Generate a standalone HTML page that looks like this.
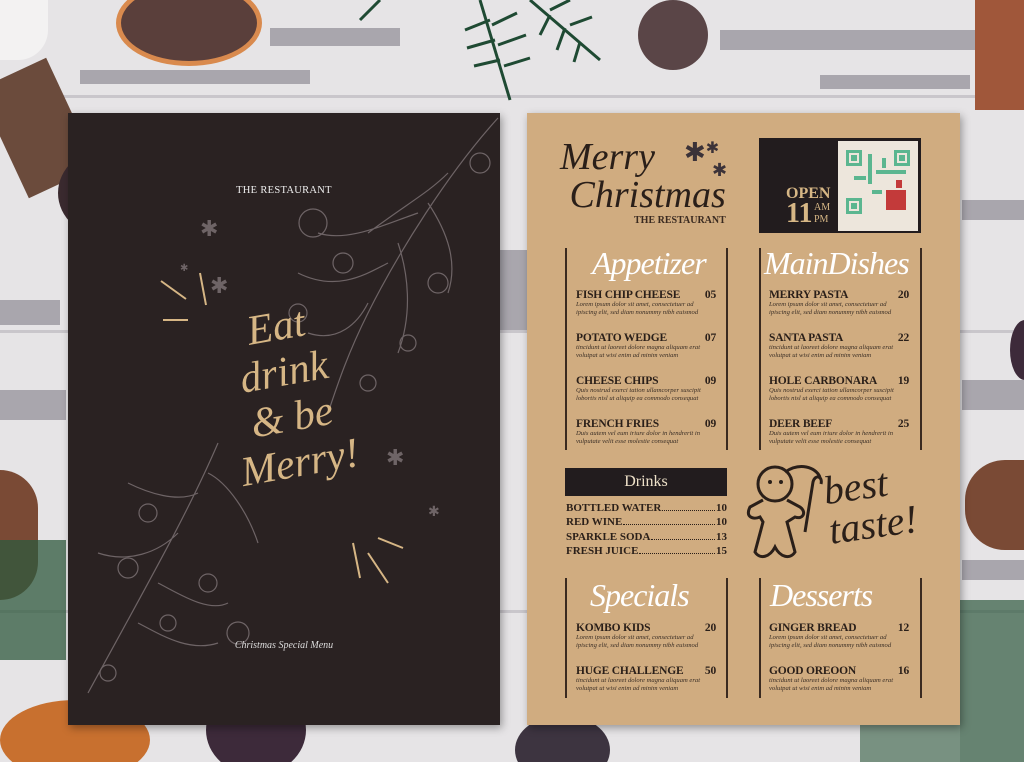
<!DOCTYPE html>
<html><head><meta charset="utf-8"><style>
*{margin:0;padding:0;box-sizing:border-box}
html,body{width:1024px;height:762px;overflow:hidden}
body{position:relative;background:#e6e4e6;font-family:"Liberation Serif",serif}
.a{position:absolute}
.plank{position:absolute;left:0;width:1024px;height:3px;background:#c9c6cb}
.chip{position:absolute;background:#6c6873;opacity:.5}
.card{position:absolute;top:113px;height:612px;box-shadow:2px 3px 8px rgba(0,0,0,.35)}
.it{position:absolute;width:140px;color:#2a1f19}
.it b{display:flex;justify-content:space-between;font-size:11.5px;letter-spacing:-.2px}
.it i{display:block;font-size:6.6px;line-height:7.6px;color:#3a2e25}
.vl{position:absolute;width:2px;background:#3a2a20}
.scr{position:absolute;font-family:"Liberation Serif",serif;font-style:italic;color:#fff;font-size:32px;letter-spacing:-1px}
.dr{position:absolute;left:566px;width:161px;font-size:11px;font-weight:bold;color:#2a1f19;display:flex}
.dr span.d{flex:1;border-bottom:1px dotted #2a1f19;margin:0 1px 3px}
</style></head><body>
<div class="plank" style="top:95px"></div><div class="plank" style="top:330px"></div><div class="plank" style="top:610px"></div>
<div class="chip" style="left:270px;top:28px;width:130px;height:18px"></div>
<div class="chip" style="left:80px;top:70px;width:230px;height:14px"></div>
<div class="chip" style="left:720px;top:30px;width:260px;height:20px"></div>
<div class="chip" style="left:820px;top:75px;width:150px;height:14px"></div>
<div class="chip" style="left:0;top:300px;width:60px;height:25px"></div>
<div class="chip" style="left:0;top:390px;width:66px;height:30px"></div>
<div class="chip" style="left:962px;top:200px;width:62px;height:20px"></div>
<div class="chip" style="left:962px;top:380px;width:62px;height:30px"></div>
<div class="chip" style="left:962px;top:560px;width:62px;height:20px"></div>
<div class="chip" style="left:500px;top:250px;width:27px;height:80px"></div>
<div class="a" style="left:0;top:0;width:48px;height:60px;background:#f3f2f2;border-radius:0 0 30px 0"></div>
<div class="a" style="left:116px;top:-20px;width:146px;height:86px;border-radius:50%;background:#5a3f3b;border:5px solid #d98a4e"></div>
<div class="a" style="left:0;top:68px;width:75px;height:120px;background:#6b4b3c;transform:rotate(-25deg)"></div>
<div class="a" style="left:58px;top:148px;width:102px;height:90px;border-radius:50%;background:#3a2a2f"></div>
<div class="a" style="left:70px;top:152px;width:85px;height:70px;border-radius:50%;background:#8d7380"></div>
<div class="a" style="left:638px;top:0;width:70px;height:70px;border-radius:50%;background:#5a4547"></div>
<div class="a" style="left:975px;top:0;width:49px;height:110px;background:#a0573a"></div>
<div class="a" style="left:0;top:470px;width:38px;height:130px;background:#7a4a35;border-radius:0 40px 40px 0"></div>
<div class="a" style="left:0;top:540px;width:66px;height:120px;background:#2f5a3e;opacity:.75"></div>
<div class="a" style="left:0;top:700px;width:150px;height:80px;border-radius:50%;background:#c8702f"></div>
<div class="a" style="left:206px;top:685px;width:100px;height:90px;border-radius:50%;background:#3d2a3a"></div>
<div class="a" style="left:515px;top:715px;width:95px;height:70px;border-radius:50%;background:#3d3440"></div>
<div class="a" style="left:965px;top:460px;width:59px;height:90px;background:#7a4a35;border-radius:40px 0 0 40px"></div>
<div class="a" style="left:960px;top:600px;width:64px;height:162px;background:#2f5a3e;opacity:.7"></div>
<div class="a" style="left:860px;top:720px;width:100px;height:42px;background:#2f5a3e;opacity:.6"></div>
<div class="a" style="left:1010px;top:320px;width:30px;height:60px;border-radius:50%;background:#3d2a3a"></div>
<svg class="a" style="left:300px;top:0" width="360" height="110"><g stroke="#1f4a33" stroke-width="3" fill="none"><path d="M180 0 L210 100 M190 20 l-25 10 M195 40 l-28 8 M200 60 l-26 6 M192 25 l25 -12 M198 45 l28 -10 M204 66 l26 -8"/><path d="M230 0 L300 60 M250 15 l-10 20 M265 28 l-8 22 M280 42 l-6 20 M250 10 l20 -10 M270 25 l22 -8"/><path d="M80 0 L60 20"/></g></svg>

<div class="card" style="left:68px;width:432px;background:#2a2222">
<svg class="a" style="left:0;top:0" width="432" height="612"><g stroke="#6e6466" stroke-width="1.2" fill="none">
<path d="M430 5 C380 60 330 140 300 200 C280 240 270 270 260 300"/>
<path d="M380 60 C360 80 340 90 300 120 M350 100 C320 110 280 130 250 120 M320 150 C300 160 270 180 230 160 M300 190 C290 210 270 230 240 220 M330 130 C340 160 345 200 330 240 M360 90 C380 120 390 150 380 180"/>
<circle cx="412" cy="50" r="10"/><circle cx="245" cy="110" r="14"/><circle cx="275" cy="150" r="10"/><circle cx="340" cy="230" r="8"/><circle cx="370" cy="170" r="10"/><circle cx="230" cy="200" r="9"/><circle cx="300" cy="270" r="8"/>
<path d="M150 330 C120 400 80 470 20 580 M130 380 C110 390 80 380 60 370 M110 420 C90 440 60 450 30 440 M90 470 C110 480 140 500 160 490 M70 510 C90 520 120 540 150 530 M140 360 C160 370 180 400 190 430"/>
<circle cx="80" cy="400" r="9"/><circle cx="60" cy="455" r="10"/><circle cx="140" cy="470" r="9"/><circle cx="100" cy="510" r="8"/><circle cx="170" cy="520" r="11"/><circle cx="40" cy="560" r="8"/></g>
<g stroke="#d6b685" stroke-width="2"><path d="M93 168 L118 186 M132 160 L138 192 M95 207 L120 207 M300 440 L320 470 M285 430 L292 465 M310 425 L335 435"/></g>
<g fill="#6e6466" font-size="22"><text x="132" y="123">✱</text><text x="142" y="180">✱</text><text x="318" y="352">✱</text><text x="360" y="403" font-size="14">✱</text><text x="112" y="158" font-size="10">✱</text></g></svg>
<div class="a" style="left:0;width:432px;top:72px;text-align:center;color:#eee;font-size:10.5px;letter-spacing:.3px">THE RESTAURANT</div>
<div class="a" style="left:130px;top:190px;width:180px;color:#d6b685;font-style:italic;font-size:42px;line-height:46px;transform:rotate(-10deg);text-align:center">Eat<br>drink<br>&amp; be<br>Merry!</div>
<div class="a" style="left:0;width:432px;top:527px;text-align:center;color:#ddd;font-size:10px;font-style:italic">Christmas Special Menu</div>
</div>

<div class="card" style="left:527px;width:433px;background:#d0ac80"></div>
<div class="a" style="left:560px;top:138px;font-style:italic;font-size:38px;line-height:38px;color:#2a1f19">Merry<br>&nbsp;Christmas</div>
<div class="a" style="left:684px;top:138px;font-size:26px;color:#3b3238">✱<span style="font-size:16px;vertical-align:top">✱</span></div>
<div class="a" style="left:712px;top:160px;font-size:18px;color:#3b3238">✱</div>
<div class="a" style="left:634px;top:215px;font-size:10px;font-weight:bold;color:#3a2a20">THE RESTAURANT</div>
<div class="a" style="left:759px;top:138px;width:162px;height:95px;background:#221c1e"></div>
<div class="a" style="left:838px;top:141px;width:80px;height:90px;background:#ede6dc"></div>
<svg class="a" style="left:846px;top:150px" width="64" height="64"><g fill="#5bb690"><rect x="0" y="0" width="16" height="16"/><rect x="48" y="0" width="16" height="16"/><rect x="0" y="48" width="16" height="16"/><rect x="22" y="4" width="4" height="30"/><rect x="30" y="20" width="30" height="4"/><rect x="8" y="26" width="12" height="4"/><rect x="36" y="8" width="4" height="10"/><rect x="26" y="40" width="10" height="4"/></g><g fill="#ede6dc"><rect x="3" y="3" width="10" height="10"/><rect x="51" y="3" width="10" height="10"/><rect x="3" y="51" width="10" height="10"/></g><g fill="#5bb690"><rect x="5" y="5" width="6" height="6"/><rect x="53" y="5" width="6" height="6"/><rect x="5" y="53" width="6" height="6"/></g><g fill="#c33a3a"><rect x="40" y="40" width="20" height="20"/><rect x="50" y="30" width="6" height="8"/></g></svg>
<div class="a" style="left:786px;top:185px;color:#d6b685;font-size:16px;font-weight:bold">OPEN</div>
<div class="a" style="left:786px;top:198px;color:#d6b685;font-size:28px;font-weight:bold">11</div>
<div class="a" style="left:814px;top:202px;color:#d6b685;font-size:10px;line-height:12px">AM<br>PM</div>

<div class="vl" style="left:565px;top:248px;height:202px"></div><div class="vl" style="left:726px;top:248px;height:202px"></div>
<div class="vl" style="left:759px;top:248px;height:202px"></div><div class="vl" style="left:920px;top:248px;height:202px"></div>
<div class="vl" style="left:565px;top:578px;height:120px"></div><div class="vl" style="left:726px;top:578px;height:120px"></div>
<div class="vl" style="left:759px;top:578px;height:120px"></div><div class="vl" style="left:920px;top:578px;height:120px"></div>

<div class="scr" style="left:592px;top:245px">Appetizer</div>
<div class="scr" style="left:764px;top:245px">MainDishes</div>
<div class="scr" style="left:590px;top:577px">Specials</div>
<div class="scr" style="left:770px;top:577px">Desserts</div>

<div class="it" style="left:576px;top:289px"><b>FISH CHIP CHEESE<span>05</span></b><i>Lorem ipsum dolor sit amet, consectetuer ad ipiscing elit, sed diam nonummy nibh euismod</i></div>
<div class="it" style="left:576px;top:332px"><b>POTATO WEDGE<span>07</span></b><i>tincidunt ut laoreet dolore magna aliquam erat volutpat ut wisi enim ad minim veniam</i></div>
<div class="it" style="left:576px;top:375px"><b>CHEESE CHIPS<span>09</span></b><i>Quis nostrud exerci tation ullamcorper suscipit lobortis nisl ut aliquip ea commodo consequat</i></div>
<div class="it" style="left:576px;top:418px"><b>FRENCH FRIES<span>09</span></b><i>Duis autem vel eum iriure dolor in hendrerit in vulputate velit esse molestie consequat</i></div>
<div class="it" style="left:769px;top:289px"><b>MERRY PASTA<span>20</span></b><i>Lorem ipsum dolor sit amet, consectetuer ad ipiscing elit, sed diam nonummy nibh euismod</i></div>
<div class="it" style="left:769px;top:332px"><b>SANTA PASTA<span>22</span></b><i>tincidunt ut laoreet dolore magna aliquam erat volutpat ut wisi enim ad minim veniam</i></div>
<div class="it" style="left:769px;top:375px"><b>HOLE CARBONARA<span>19</span></b><i>Quis nostrud exerci tation ullamcorper suscipit lobortis nisl ut aliquip ea commodo consequat</i></div>
<div class="it" style="left:769px;top:418px"><b>DEER BEEF<span>25</span></b><i>Duis autem vel eum iriure dolor in hendrerit in vulputate velit esse molestie consequat</i></div>
<div class="it" style="left:576px;top:622px"><b>KOMBO KIDS<span>20</span></b><i>Lorem ipsum dolor sit amet, consectetuer ad ipiscing elit, sed diam nonummy nibh euismod</i></div>
<div class="it" style="left:576px;top:665px"><b>HUGE CHALLENGE<span>50</span></b><i>tincidunt ut laoreet dolore magna aliquam erat volutpat ut wisi enim ad minim veniam</i></div>
<div class="it" style="left:769px;top:622px"><b>GINGER BREAD<span>12</span></b><i>Lorem ipsum dolor sit amet, consectetuer ad ipiscing elit, sed diam nonummy nibh euismod</i></div>
<div class="it" style="left:769px;top:665px"><b>GOOD OREOON<span>16</span></b><i>tincidunt ut laoreet dolore magna aliquam erat volutpat ut wisi enim ad minim veniam</i></div>

<div class="a" style="left:565px;top:468px;width:162px;height:28px;background:#221c1e;color:#ede0c8;font-size:16px;text-align:center;line-height:28px">Drinks</div>
<div class="dr" style="top:502px">BOTTLED WATER<span class="d"></span>10</div>
<div class="dr" style="top:516px">RED WINE<span class="d"></span>10</div>
<div class="dr" style="top:531px">SPARKLE SODA<span class="d"></span>13</div>
<div class="dr" style="top:545px">FRESH JUICE<span class="d"></span>15</div>

<svg class="a" style="left:745px;top:462px" width="90" height="100"><g stroke="#2a1f19" stroke-width="3" fill="none"><circle cx="30" cy="22" r="17"/><path d="M18 38 L5 45 C0 55 8 58 15 55 L18 60 L10 90 C15 98 25 95 30 85 C35 95 45 98 50 90 L42 60 L50 55 C58 58 62 50 55 45 L42 38"/><path d="M60 70 L68 20 C70 12 78 14 76 22"/><path d="M40 10 C55 0 70 5 75 15"/></g><circle cx="25" cy="20" r="2" fill="#2a1f19"/><circle cx="36" cy="20" r="2" fill="#2a1f19"/></svg>
<div class="a" style="left:826px;top:465px;font-style:italic;font-size:40px;line-height:40px;color:#2a1f19;transform:rotate(-8deg)">best<br>taste!</div>
</body></html>
